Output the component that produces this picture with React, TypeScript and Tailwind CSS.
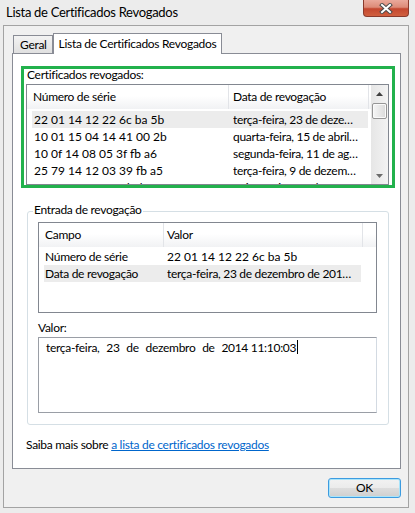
import type { ReactNode } from 'react'

const REVOKED = [
  ['22 01 14 12 22 6c ba 5b', 'terça-feira, 23 de deze…'],
  ['10 01 15 04 14 41 00 2b', 'quarta-feira, 15 de abril…'],
  ['10 0f 14 08 05 3f fb a6', 'segunda-feira, 11 de ag…'],
  ['25 79 14 12 03 39 fb a5', 'terça-feira, 9 de dezem…'],
  ['11 5f 14 10 21 0d 4b 3c', 'quinta-feira, 16 de out…'],
]

const ENTRY = [
  ['Número de série', '22 01 14 12 22 6c ba 5b'],
  ['Data de revogação', 'terça-feira, 23 de dezembro de 201…'],
]

function CloseButton() {
  return (
    <div className="flex h-[17px] w-[46px] items-center justify-center rounded-b-[4px] border border-t-0 border-[#8a3a2c] bg-[linear-gradient(#eaa99b_0%,#dd8b78_45%,#c4472f_55%,#d0603f_100%)]">
      <svg width="14" height="11" viewBox="0 0 14 11">
        <path d="M3 2 L11 9 M11 2 L3 9" stroke="#4b4b4b" strokeWidth="4" strokeLinecap="square" />
        <path d="M3 2 L11 9 M11 2 L3 9" stroke="#ffffff" strokeWidth="2" strokeLinecap="square" />
      </svg>
    </div>
  )
}

function Arrow({ down = false }: { down?: boolean }) {
  return (
    <svg width="7" height="4" viewBox="0 0 7 4">
      <path d={down ? 'M0 0 H7 L3.5 4 Z' : 'M0 4 H7 L3.5 0 Z'} fill={down ? '#6b6b6b' : '#404040'} />
    </svg>
  )
}

function Scrollbar() {
  return (
    <div className="flex w-[17px] flex-col bg-[linear-gradient(to_right,#e6e6e6,#f3f3f3)]">
      <div className="flex h-[18px] items-center justify-center">
        <Arrow />
      </div>
      <div className="mx-[1px] h-[16px] rounded-[2px] border border-[#969696] bg-[linear-gradient(to_right,#f6f6f6,#dadada)] shadow-[inset_0_0_0_1px_#fafafa]" />
      <div className="flex-1" />
      <div className="flex h-[17px] items-center justify-center">
        <Arrow down />
      </div>
    </div>
  )
}

function HeaderCell({ w, pl, children }: { w: string; pl: string; children?: ReactNode }) {
  return (
    <div className={`${w} ${pl} flex h-full items-center whitespace-nowrap border-r border-[#e2e4e8]`}>
      {children}
    </div>
  )
}

export default function App() {
  return (
    <div className="flex h-[513px] w-[415px] flex-col overflow-hidden bg-[#ececec] font-['Lato',sans-serif] text-[12px] tracking-[-0.3px] text-black">
      {/* title bar */}
      <div className="flex h-[25px] shrink-0 items-start justify-between pl-[6px] pr-[6px]">
        <span className="mt-[4px] text-[13px] leading-[16px]">Lista de Certificados Revogados</span>
        <CloseButton />
      </div>

      {/* client area */}
      <div className="ml-[3px] flex h-[483px] w-[406px] flex-col border border-[#a3a3a3] bg-[#f0f0f0] pl-[8px]">
        {/* tabs */}
        <div className="flex h-[27px] shrink-0 items-end pl-[1px]">
          <div className="flex h-[18px] w-[40px] items-center border-x border-t border-[#898c95] bg-[linear-gradient(#f3f3f3,#e0e0e0)] pl-[6px] pt-[1px] leading-[14px]">
            Geral
          </div>
          <div className="relative z-10 -mb-px flex h-[21px] w-[169px] items-center justify-center whitespace-nowrap border-x border-t border-[#898c95] bg-white leading-[14px]">
            Lista de Certificados Revogados
          </div>
        </div>

        {/* tab page */}
        <div className="flex h-[416px] w-[389px] flex-col border border-[#898c95] bg-white">
          <div className="ml-[8px] mt-[12px] flex h-[122px] w-[374px] flex-col border-[3px] border-[#22b14c]">
            <div className="pl-[3px] leading-[11px]">Certificados revogados:</div>
            <div className="ml-[2px] mt-[4px] flex h-[101px] w-[363px] border border-[#828790]">
              <div className="flex w-[344px] flex-col overflow-hidden">
                <div className="flex h-[24px] shrink-0 bg-[linear-gradient(#ffffff_0%,#ffffff_45%,#f1f2f4_100%)]">
                  <HeaderCell w="w-[202px]" pl="pl-[6px]">Número de série</HeaderCell>
                  <HeaderCell w="w-[140px]" pl="pl-[4px]">Data de revogação</HeaderCell>
                </div>
                <div className="mt-[2px] flex flex-col">
                  {REVOKED.map(([serial, date], i) => (
                    <div
                      key={serial}
                      className={`ml-[5px] grid h-[17px] w-[336px] shrink-0 grid-cols-[199px_1fr] items-center whitespace-nowrap pl-[2px] leading-[14px] ${i === 0 ? 'bg-[#ececec]' : ''}`}
                    >
                      <span className="tracking-normal">{serial}</span>
                      <span className="overflow-hidden">{date}</span>
                    </div>
                  ))}
                </div>
              </div>
              <Scrollbar />
            </div>
          </div>

          {/* revocation entry group */}
          <div className="relative ml-[14px] mt-[23px] flex h-[214px] w-[362px] flex-col rounded-[3px] border border-[#d5dfe5]">
            <span className="absolute left-[5px] top-[-9px] bg-white px-[1px] leading-[14px]">Entrada de revogação</span>
            <div className="ml-[10px] mt-[10px] flex h-[91px] w-[339px] flex-col border border-[#828790]">
              <div className="flex h-[24px] shrink-0 bg-[linear-gradient(#ffffff_0%,#ffffff_45%,#f1f2f4_100%)]">
                <HeaderCell w="w-[125px]" pl="pl-[6px]">Campo</HeaderCell>
                <HeaderCell w="w-[199px]" pl="pl-[3px]">Valor</HeaderCell>
              </div>
              <div className="mt-[1px] flex flex-col">
                {ENTRY.map(([field, value], i) => (
                  <div
                    key={field}
                    className={`ml-[5px] grid h-[17px] w-[317px] grid-cols-[122px_1fr] items-center whitespace-nowrap pl-[1px] leading-[14px] ${i === 1 ? 'bg-[#ececec]' : ''}`}
                  >
                    <span>{field}</span>
                    <span className={`overflow-hidden ${i === 0 ? 'tracking-normal' : ''}`}>{value}</span>
                  </div>
                ))}
              </div>
            </div>
            <div className="ml-[10px] mt-[8px] leading-[14px]">Valor:</div>
            <div className="ml-[10px] mt-[2px] h-[76px] w-[339px] whitespace-nowrap border border-[#9a9ea6] border-r-[#d3dae2] pl-[7px] leading-[14px]">
              <span className="[word-spacing:4px]">terça-feira, 23 de dezembro de 2014</span> 11:10:03
              <span className="ml-[1px] inline-block h-[14px] w-[1px] translate-y-[2px] bg-black" />
            </div>
          </div>

          <div className="ml-[13px] mt-[13px] leading-[14px]">
            Saiba mais sobre{' '}
            <a href="#" className="text-[#0066cc] underline">
              a lista de certificados revogados
            </a>
          </div>
        </div>

        {/* buttons */}
        <div className="mt-[9px] flex w-[389px] justify-end">
          <button className="flex h-[20px] w-[73px] items-center justify-center rounded-[3px] border border-[#3c9be0] bg-[linear-gradient(#f2f2f2_0%,#ebebeb_50%,#dddddd_51%,#cfcfcf_100%)] leading-[14px] shadow-[inset_0_0_0_1px_#a9e4fa]">
            OK
          </button>
        </div>
      </div>
    </div>
  )
}
